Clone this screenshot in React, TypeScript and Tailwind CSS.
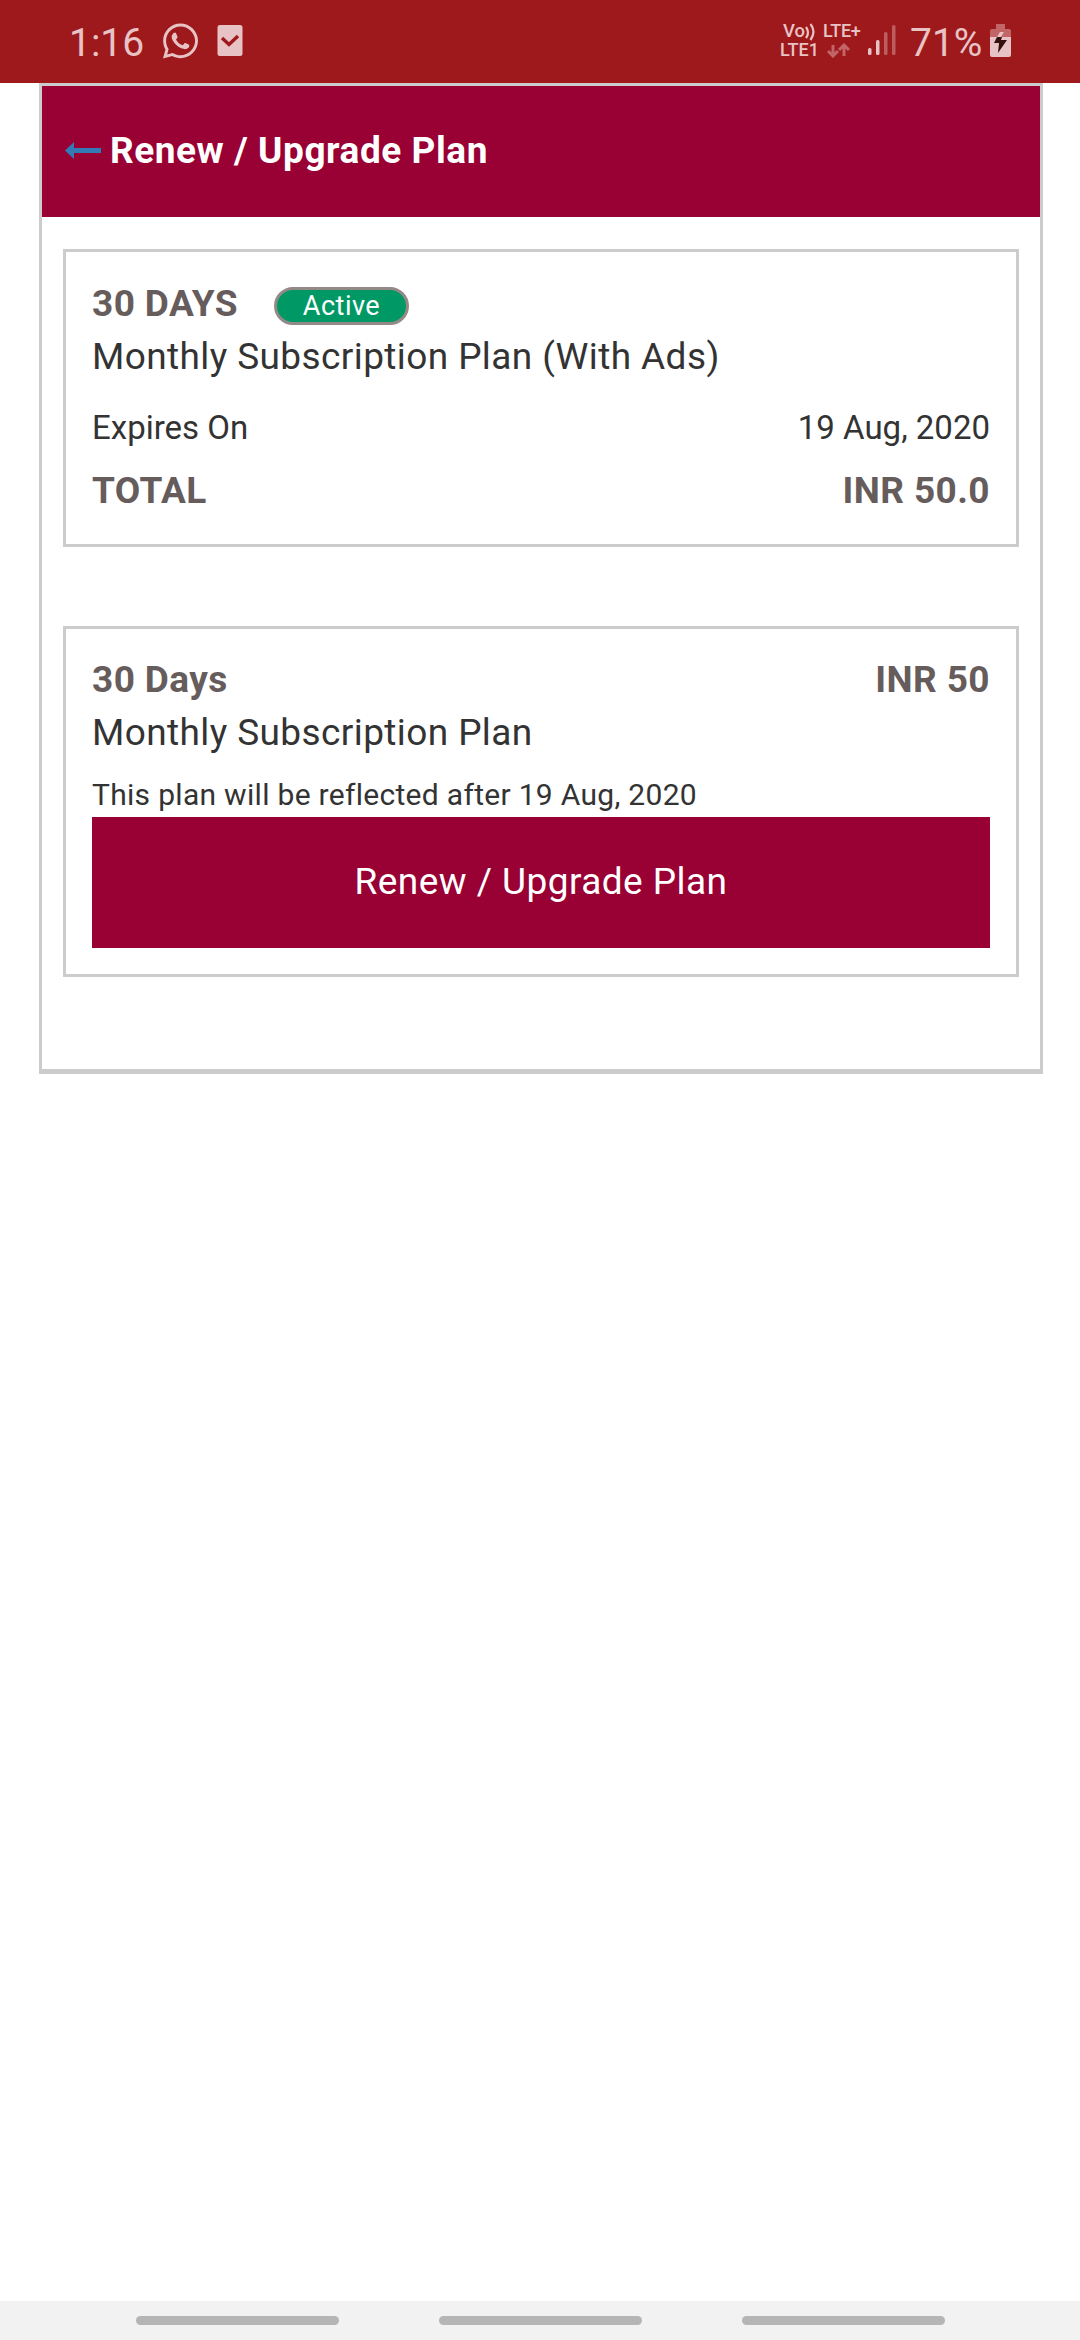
import type { ReactNode } from "react";
import { FaWhatsapp } from "react-icons/fa";

function StatusBar() {
  return (
    <header className="flex h-[83px] items-start bg-[#9e191b] pl-[69px] text-[#e8c3c5]">
      <span className="mt-[20px] w-[94px] text-[39px] leading-[46px]">1:16</span>
      <FaWhatsapp className="mt-[21px] h-[40px] w-[35px]" />
      <svg className="mt-[25px] ml-[19px] h-[32px] w-[26px]" viewBox="0 0 26 32">
        <rect x="0.5" width="25" height="31" rx="2.500" fill="currentColor" />
        <path d="M5 13l7 6.500 9-8.500" fill="none" stroke="#9e191b" strokeWidth="3.400" />
      </svg>
      <div className="mt-[22px] ml-[537px] flex w-[84px] flex-col text-[18px] leading-[18px] font-medium">
        <div className="flex pl-[3px]">
          <span className="flex w-[40px] text-[18.5px]">
            Vo
            <svg className="mt-px h-[18px] w-[11px]" viewBox="0 0 11 18">
              <path d="M1 4q4 5.500 0 11M5.500 1q6 7.500 0 16" fill="none" stroke="currentColor" strokeWidth="2.200" />
            </svg>
          </span>
          <span className="tracking-[-0.3px]">LTE+</span>
        </div>
        <div className="flex">
          <span className="w-[47px]">LTE1</span>
          <svg className="mt-[2px] h-[15px] w-[23px] text-[#c26567]" viewBox="0 0 23 15">
            <path d="M6 2v11M1 8l5 5 5-5M17 13V2M12 7l5-5 5 5" fill="none" stroke="currentColor" strokeWidth="3" />
          </svg>
        </div>
      </div>
      <svg className="mt-[25px] ml-[4px] h-[31px] w-[28px]" viewBox="0 0 28 31">
        <g fill="currentColor">
          <rect x="0" y="23" width="3.500" height="7" rx="1.500" />
          <rect x="8" y="15" width="3.500" height="15" rx="1.500" />
          <rect x="16" y="7" width="3.500" height="23" rx="1.500" opacity=".4" />
          <rect x="24" y="0" width="3.500" height="30" rx="1.500" opacity=".4" />
        </g>
      </svg>
      <span className="mt-[20px] ml-[14px] w-[80px] text-[39px] leading-[46px]">71%</span>
      <svg className="mt-[24px] h-[33px] w-[21px]" viewBox="0 0 21 33">
        <path d="M6 0h9v5h4q2 0 2 2v6H0V7q0-2 2-2h4z" fill="#c26567" />
        <path d="M0 13h21v18q0 2-2 2H2q-2 0-2-2z" fill="currentColor" />
        <path d="M10 8h4l-3 5H7z" fill="currentColor" />
        <path d="M7 13h5l-1 3h6L8 29l1-10H4z" fill="#35100f" />
      </svg>
    </header>
  );
}

function Card({ className, children }: { className: string; children: ReactNode }) {
  return <section className={`border-[3px] border-[#ccc] px-[26px] ${className}`}>{children}</section>;
}

export default function App() {
  return (
    <div className="flex h-[2340px] w-[1080px] flex-col bg-white font-['Roboto',sans-serif] text-[37px] leading-[53px] text-[#333]">
      <StatusBar />
      <main className="mr-[37px] ml-[39px] h-[991px] border-[3px] border-b-[5px] border-[#ccc]">
        <div className="flex h-[131px] items-center bg-[#990033] pb-[2px] pl-[23px] font-bold text-white">
          <svg className="h-[17px] w-[36px]" viewBox="0 0 36 17">
            <path d="M0 8.500L9 0v6h27v5H9v6z" fill="#337ab7" />
          </svg>
          <h1 className="ml-[9px] tracking-[0.55px]">Renew / Upgrade Plan</h1>
        </div>
        <div className="px-[21px] pt-[32px]">
          <Card className="h-[298px] pt-[25px]">
            <div className="flex h-[53px]">
              <h2 className="w-[182px] font-bold tracking-[0.4px] text-[#665c5c]">30 DAYS</h2>
              <span className="mt-[10px] flex h-[38px] w-[135px] items-center justify-center rounded-full border-[3px] border-[#938a88] bg-[#009966] text-[27px] leading-[32px] tracking-[0.5px] text-white">
                Active
              </span>
            </div>
            <p className="tracking-[0.4px]">Monthly Subscription Plan (With Ads)</p>
            <div className="mt-[21px] flex justify-between text-[33px] leading-[48px]">
              <span>Expires On</span>
              <span>19 Aug, 2020</span>
            </div>
            <div className="mt-[12px] flex justify-between font-bold tracking-[0.4px] text-[#665c5c]">
              <span>TOTAL</span>
              <span>INR 50.0</span>
            </div>
          </Card>
          <Card className="mt-[79px] h-[351px] pt-[24px]">
            <div className="flex justify-between font-bold tracking-[0.4px] text-[#665c5c]">
              <h2>30 Days</h2>
              <span>INR 50</span>
            </div>
            <p className="tracking-[0.4px]">Monthly Subscription Plan</p>
            <p className="mt-[14px] text-[30px] leading-[44px] tracking-[0.3px]">
              This plan will be reflected after 19 Aug, 2020
            </p>
            <button className="h-[131px] w-full bg-[#990033] pb-[2px] tracking-[0.45px] text-white">Renew / Upgrade Plan</button>
          </Card>
        </div>
      </main>
      <nav className="mt-auto flex h-[39px] items-center gap-[100px] bg-[#f2f2f2] pl-[136px]">
        <span className="h-[9px] w-[203px] rounded-full bg-[#b5b5b5]" />
        <span className="h-[9px] w-[203px] rounded-full bg-[#b5b5b5]" />
        <span className="h-[9px] w-[203px] rounded-full bg-[#b5b5b5]" />
      </nav>
    </div>
  );
}
